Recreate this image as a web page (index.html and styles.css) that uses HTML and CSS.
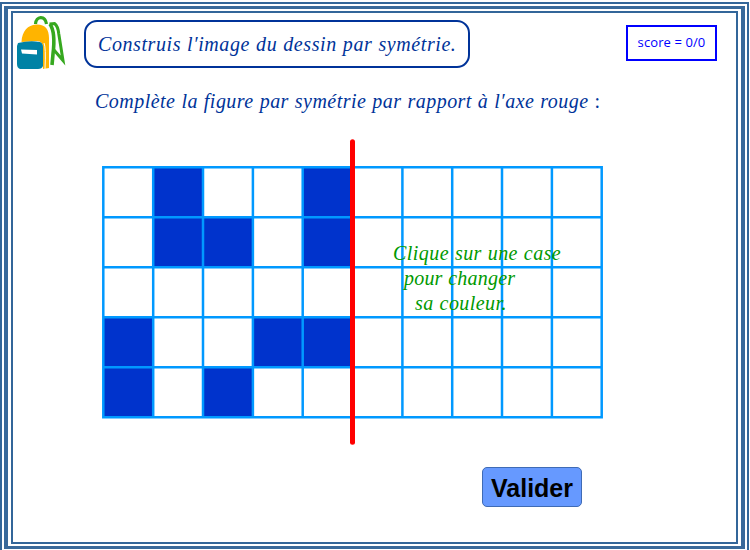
FILE: index.html
```html
<!DOCTYPE html>
<html lang="fr">
<head>
<meta charset="utf-8">
<title>Symétrie axiale</title>
<link rel="stylesheet" href="styles.css">
</head>
<body>
<div class="frame"><div class="frame-mid"><main class="sheet">
  <header class="top">
    <svg class="bag" width="52" height="58" viewBox="14 14 52 58">
      <path d="M35.500 24C36 16 45 15 46.500 24" fill="none" stroke="#36a81f" stroke-width="3.200"/>
      <path d="M50 24C54 30 54.500 42 53 54L52 65" fill="none" stroke="#36a81f" stroke-width="3.600"/>
      <path d="M49.500 24L54.500 23.500Q58 26 58.800 34L63 60.500L54 50" fill="none" stroke="#36a81f" stroke-width="3"/>
      <path d="M21.500 42C22 31 28 25 36 24.500C45 24 49 29 49 38V68L43 69V48Q43 41 37 41Z" fill="#ffb400"/>
      <path d="M44 43Q46 47 45 69" fill="none" stroke="#fff" stroke-width="1"/>
      <path d="M18 43Q30 40 40 42Q43 43 43 47V66Q42 69 38 69H20Q17 68 17 64V46Z" fill="#0082a5"/>
      <path d="M21 49.500L37 50V54.500L22 53.500Z" fill="#fff"/>
    </svg>
    <h1 class="title math">Construis l′image du dessin par symétrie.</h1>
    <div class="score">score = 0/0</div>
  </header>
  <p class="instruction math">Complète la figure par symétrie par rapport à l′axe rouge <span class="colon">:</span></p>
  <div class="board">
    <svg class="grid" width="510" height="310" viewBox="98 137 510 310">
      <g fill="#0033cc">
        <path d="M153.200 167.300h50v50h50v50h-100z"/>
        <path d="M303 167.300h50v100h-50z"/>
        <path d="M103.300 317.300h50v100h-50z"/>
        <path d="M253 317.300h100v50h-100z"/>
        <path d="M203.200 367.300h50v50h-50z"/>
      </g>
      <path fill="none" stroke="#0099ff" stroke-width="2.500" stroke-linecap="square" d="M103.300 167.200H601.700M103.300 217.200H601.700M103.300 267.200H601.700M103.300 317.200H601.700M103.300 367.200H601.700M103.300 417.200H601.700M103.300 167.200V417.200M153.200 167.200V417.200M203 167.200V417.200M252.900 167.200V417.200M302.700 167.200V417.200M352.500 167.200V417.200M402.400 167.200V417.200M452.200 167.200V417.200M502 167.200V417.200M551.900 167.200V417.200M601.700 167.200V417.200"/>
      <path d="M352.500 141.800V442.200" stroke="#f00" stroke-width="5" stroke-linecap="round"/>
    </svg>
    <div class="hint math"><div class="h1">Clique sur une case</div><div class="h2">pour changer</div><div class="h3">sa couleur.</div></div>
  </div>
  <button class="validate">Valider</button>
</main></div></div>
</body>
</html>
```
FILE: styles.css
```css
* { box-sizing: border-box; }
body { margin: 0; width: 750px; height: 550px; overflow: hidden; background: #fff; }
.frame { width: 749px; height: 550px; margin-top: 2px; border: 2px solid #336699; border-bottom: 0; padding: 2px 2px 0; }
.frame-mid { width: 741px; height: 543px; border: 4px solid #39699a; border-top-width: 3px; border-bottom-width: 3px; padding: 2px 3px; }
.sheet { width: 727px; height: 533px; border: 2px solid #336699; }
.math { font-family: "Liberation Serif", serif; font-style: italic; font-weight: 400; font-size: 20px; line-height: 25px; color: #003399; white-space: nowrap; }
.top { display: flex; align-items: flex-start; height: 58px; }
.bag { margin: 1px 0 0 1px; flex: none; }
.title { width: 386px; height: 48px; margin: 7px 0 0 18px; padding: 10px 0 0 12px; border: 2px solid #003399; border-radius: 13px; letter-spacing: 0.58px; word-spacing: 0.5px; }
.score { width: 91px; height: 36px; margin: 12px 0 0 156px; border: 2px solid #00f; color: #00f; font: 13px/31px "Open Sans", sans-serif; letter-spacing: 0.1px; text-align: center; white-space: nowrap; }
.instruction { margin: 18px 0 0 82px; letter-spacing: 0.47px; word-spacing: 0.5px; }
.colon { font-style: normal; }
.board { position: relative; width: 510px; height: 310px; margin: 23px 0 0 85px; }
.grid { display: block; }
.hint { position: absolute; left: 295px; top: 104px; color: #009900; letter-spacing: 0.44px; word-spacing: 0.5px; }
.h2 { padding-left: 11px; letter-spacing: 0.2px; }
.h3 { padding-left: 22px; }
.validate { display: block; width: 100px; height: 40px; margin: 20px 0 0 469px; padding: 3px 0 0; border: 1px solid #3f6bb5; border-radius: 5px; background: #6699ff; color: #000; font: bold 25px "Liberation Sans", sans-serif; }
```
